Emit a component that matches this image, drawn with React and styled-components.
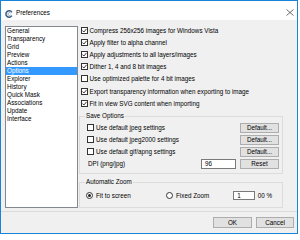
import React from 'react'
import styled, { createGlobalStyle } from 'styled-components'

const GlobalStyle = createGlobalStyle`
  *, *:before, *:after { box-sizing: border-box; }
  html, body { margin: 0; padding: 0; background: #fff; }
  body {
    font-family: "Liberation Sans", Arial, sans-serif;
    font-size: 6.3px;
    color: #000;
  }
`

const Window = styled.div`
  width: 298px;
  height: 234px;
  border: 1px solid #1883d7;
  background: #f0f0f0;
  display: flex;
  flex-direction: column;
`

const TitleBar = styled.div`
  height: 19px;
  flex: none;
  background: #fff;
  display: flex;
  align-items: flex-start;
  padding: 8px 0 0 4px;
  position: relative;
`

const Title = styled.span`
  margin-left: 3px;
  line-height: 8px;
`

const Close = styled.svg`
  position: absolute;
  right: 3px;
  top: 8px;
`

const Body = styled.div`
  flex: 1;
  display: flex;
  flex-direction: column;
`

const Main = styled.div`
  display: flex;
  padding: 4px 0 0 4px;
`

const CategoryList = styled.ul`
  list-style: none;
  margin: 2px 0 0;
  padding: 0;
  width: 73px;
  height: 182px;
  background: #fff;
  border: 1px solid #828790;
`

const Category = styled.li`
  height: 8px;
  line-height: 8px;
  padding-left: 1px;
  background: ${p => (p.$active ? '#3399ff' : 'transparent')};
  color: ${p => (p.$active ? '#fff' : '#000')};
`

const Panel = styled.div`
  margin-left: 1px;
  width: 204px;
  display: flex;
  flex-direction: column;
`

const CheckRow = styled.div`
  height: 12.2px;
  display: flex;
  align-items: center;
  padding-left: 2px;
  white-space: nowrap;
`

const Box = styled.span`
  width: 7px;
  height: 7px;
  flex: none;
  border: 1px solid #333;
  background: #fff;
  margin-right: ${p => p.$gap || 1.5}px;
  display: flex;
  align-items: center;
  justify-content: center;
`

const Group = styled.div`
  position: relative;
  border: 1px solid #dcdcdc;
  margin-top: ${p => p.$top}px;
  padding: ${p => p.$pad};
`

const Legend = styled.span`
  position: absolute;
  left: 5px;
  top: -5px;
  padding: 0 1px;
  line-height: 8px;
  background: #f0f0f0;
`

const GroupRow = styled.div`
  height: 12px;
  display: flex;
  align-items: center;
  white-space: nowrap;
`

const Button = styled.div`
  width: ${p => p.$w || 39}px;
  height: ${p => p.$h || 10.5}px;
  flex: none;
  margin-left: ${p => (p.$push ? 'auto' : '0')};
  background: #e1e1e1;
  border: 1px solid #adadad;
  display: flex;
  align-items: center;
  justify-content: center;
`

const Field = styled.div`
  width: ${p => p.$w}px;
  height: ${p => p.$h}px;
  flex: none;
  margin-left: auto;
  margin-right: ${p => p.$mr || 0}px;
  background: #fff;
  border: 1px solid #7a7a7a;
  padding-left: 3px;
  display: flex;
  align-items: center;
`

const DpiLabel = styled.span`
  margin-left: 1px;
`

const Option = styled.div`
  display: flex;
  align-items: center;
  width: ${p => (p.$w ? `${p.$w}px` : 'auto')};
  white-space: nowrap;
`

const Radio = styled.span`
  width: 7px;
  height: 7px;
  flex: none;
  border-radius: 50%;
  border: 1px solid #333;
  background: #fff;
  margin-right: 3px;
  display: flex;
  align-items: center;
  justify-content: center;

  &:after {
    content: "";
    width: 3px;
    height: 3px;
    border-radius: 50%;
    background: ${p => (p.$on ? '#222' : 'transparent')};
  }
`

const Unit = styled.span`
  margin-left: 2.5px;
`

const Footer = styled.div`
  margin-top: 3px;
  border-top: 1px solid #dadada;
  flex: 1;
  display: flex;
  justify-content: flex-end;
  gap: 4px;
  padding: 5px 3px 0 0;
`

const categories = [
  'General', 'Transparency', 'Grid', 'Preview', 'Actions', 'Options',
  'Explorer', 'History', 'Quick Mask', 'Associations', 'Update', 'Interface',
]

const options = [
  ['Compress 256x256 images for Windows Vista', true],
  ['Apply filter to alpha channel', true],
  ['Apply adjustments to all layers/images', true],
  ['Dither 1, 4 and 8 bit images', true],
  ['Use optimized palette for 4 bit images', false],
  ['Export transparency information when exporting to image', true],
  ['Fit in view SVG content when importing', true],
]

const saveOptions = [
  'Use default jpeg settings',
  'Use default jpeg2000 settings',
  'Use default gif/apng settings',
]

const Check = ({ on, gap }) => (
  <Box $gap={gap}>
    {on && (
      <svg width="5" height="5" viewBox="0 0 5 5">
        <polyline points="0.4,2.5 1.9,4 4.6,0.8" fill="none" stroke="#222" strokeWidth="0.9" />
      </svg>
    )}
  </Box>
)

const AppIcon = () => (
  <svg width="8" height="8" viewBox="0 0 8 8" style={{ marginTop: 1 }}>
    <path d="M6.8 2.3 A3.2 3.2 0 1 0 6.8 5.7" fill="none" stroke="#3b5d82" strokeWidth="1.5" />
    <path d="M5.6 3.4 A1.4 1.4 0 1 0 5.6 4.6" fill="none" stroke="#7f9bb8" strokeWidth="0.9" />
  </svg>
)

export default function App() {
  return (
    <>
      <GlobalStyle />
      <Window>
        <TitleBar>
          <AppIcon />
          <Title>Preferences</Title>
          <Close width="8" height="7" viewBox="0 0 8 7">
            <path d="M0.5 0.5 L7.5 6.5 M7.5 0.5 L0.5 6.5" stroke="#333" strokeWidth="0.7" />
          </Close>
        </TitleBar>
        <Body>
          <Main>
            <CategoryList>
              {categories.map(c => (
                <Category key={c} $active={c === 'Options'}>{c}</Category>
              ))}
            </CategoryList>
            <Panel>
              {options.map(([label, on]) => (
                <CheckRow key={label}>
                  <Check on={on} />
                  {label}
                </CheckRow>
              ))}

              <Group $top={6.6} $pad="5px 3px 3px 7px">
                <Legend>Save Options</Legend>
                {saveOptions.map(label => (
                  <GroupRow key={label}>
                    <Check gap={2} />
                    {label}
                    <Button $push>Default...</Button>
                  </GroupRow>
                ))}
                <GroupRow>
                  <DpiLabel>DPI (png/jpg)</DpiLabel>
                  <Field $w={35} $h={10} $mr={4}>96</Field>
                  <Button>Reset</Button>
                </GroupRow>
              </Group>

              <Group $top={8} $pad="6.5px 10px 5.5px 6px">
                <Legend>Automatic Zoom</Legend>
                <GroupRow>
                  <Option $w={80}>
                    <Radio $on />
                    Fit to screen
                  </Option>
                  <Option>
                    <Radio />
                    Fixed Zoom
                  </Option>
                  <Field $w={22} $h={9}>1</Field>
                  <Unit>00 %</Unit>
                </GroupRow>
              </Group>
            </Panel>
          </Main>
          <Footer>
            <Button $w={39} $h={11}>OK</Button>
            <Button $w={38} $h={11}>Cancel</Button>
          </Footer>
        </Body>
      </Window>
    </>
  )
}
